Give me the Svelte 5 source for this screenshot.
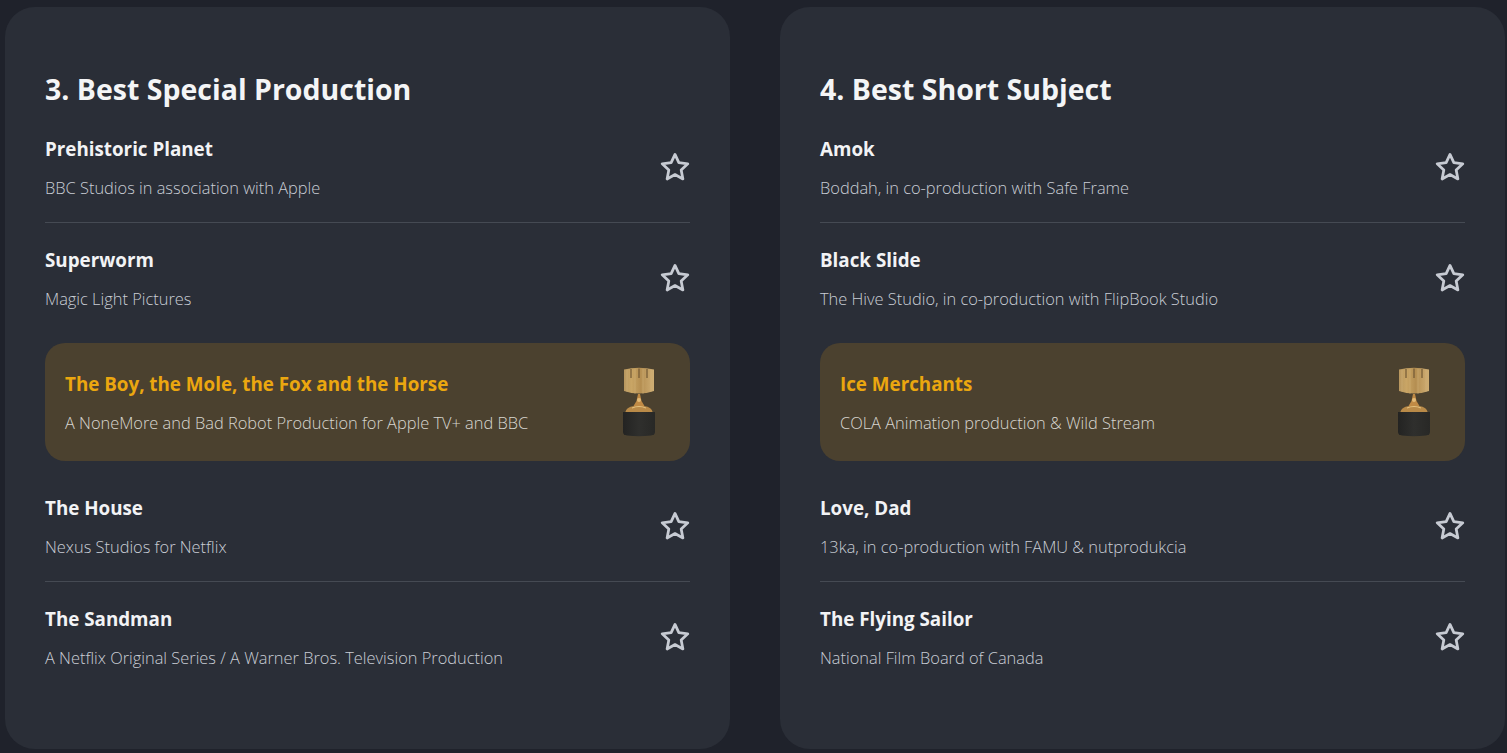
<script lang="ts">
    type Nominee = { title: string; studio: string; winner?: boolean };
    type Category = { heading: string; nominees: Nominee[] };

    const categories: Category[] = [
        {
            heading: "3. Best Special Production",
            nominees: [
                { title: "Prehistoric Planet", studio: "BBC Studios in association with Apple" },
                { title: "Superworm", studio: "Magic Light Pictures" },
                {
                    title: "The Boy, the Mole, the Fox and the Horse",
                    studio: "A NoneMore and Bad Robot Production for Apple TV+ and BBC",
                    winner: true
                },
                { title: "The House", studio: "Nexus Studios for Netflix" },
                { title: "The Sandman", studio: "A Netflix Original Series / A Warner Bros. Television Production" }
            ]
        },
        {
            heading: "4. Best Short Subject",
            nominees: [
                { title: "Amok", studio: "Boddah, in co-production with Safe Frame" },
                { title: "Black Slide", studio: "The Hive Studio, in co-production with FlipBook Studio" },
                { title: "Ice Merchants", studio: "COLA Animation production & Wild Stream", winner: true },
                { title: "Love, Dad", studio: "13ka, in co-production with FAMU & nutprodukcia" },
                { title: "The Flying Sailor", studio: "National Film Board of Canada" }
            ]
        }
    ];
</script>

<main class="page">
    {#each categories as cat, c}
        <section class="card">
            <h2 class="heading">{cat.heading}</h2>
            <ul class="list">
                {#each cat.nominees as n}
                    <li class="row" class:winner={n.winner}>
                        <div class="text">
                            <h3 class="title">{n.title}</h3>
                            <p class="studio">{n.studio}</p>
                        </div>
                        {#if n.winner}
                            <svg class="trophy" viewBox="0 0 34 70" aria-hidden="true">
                                <defs>
                                    <linearGradient id="cup{c}" x1="0" x2="1" y1="0" y2="0">
                                        <stop offset="0" stop-color="#b8975f" />
                                        <stop offset="0.25" stop-color="#c9a565" />
                                        <stop offset="0.55" stop-color="#b58f52" />
                                        <stop offset="1" stop-color="#cfae74" />
                                    </linearGradient>
                                    <linearGradient id="base{c}" x1="0" x2="1" y1="0" y2="0">
                                        <stop offset="0" stop-color="#232322" />
                                        <stop offset="0.5" stop-color="#2f2f2d" />
                                        <stop offset="1" stop-color="#282826" />
                                    </linearGradient>
                                </defs>
                                <path d="M2 2.5 Q17 -1 32 2.5 V24 Q17 29 2 24Z" fill="url(#cup{c})" />
                                <path d="M9 2V11M17 1.5V11M25 2V11" stroke="#6d5533" stroke-width="1.4" opacity="0.8" />
                                <path d="M5 3V25M13 2V27M21 2V27M29 3V25" stroke="#d6b77f" stroke-width="1" opacity="0.45" />
                                <path d="M16 27h2l1.5 7 3 5H11.500l3-5z" fill="#c08a45" />
                                <circle cx="17" cy="33" r="2" fill="#e3bb77" />
                                <path d="M3 46 Q4 40 12 39 H22 Q30 40 31 46Z" fill="#b98a48" />
                                <path d="M10 41 Q17 38 24 41" stroke="#e5c27f" stroke-width="1.2" fill="none" />
                                <path d="M1 45H33V65Q33 68 29 68.500Q17 70 5 68.500Q1 68 1 65Z" fill="url(#base{c})" />
                            </svg>
                        {:else}
                            <svg class="star" viewBox="0 0 30 30" aria-hidden="true">
                                <path
                                    d="M15 3.2l3.6 7.7 8.4 1.1-6.2 5.8 1.6 8.4L15 22.1l-7.4 4.1 1.6-8.4L3 12l8.4-1.1z"
                                    fill="none"
                                    stroke="#c7cbd3"
                                    stroke-width="2.6"
                                    stroke-linejoin="round"
                                />
                            </svg>
                        {/if}
                    </li>
                {/each}
            </ul>
        </section>
    {/each}
</main>

<style>
    :global(body) {
        margin: 0;
        background: #1f222b;
    }

    .page {
        display: grid;
        grid-template-columns: 725px 725px;
        gap: 50px;
        padding: 7px 2px 4px 5px;
        height: 753px;
        box-sizing: border-box;
        font-family: "Open Sans", "Noto Sans", sans-serif;
    }

    .card {
        background: #2a2e37;
        border-radius: 30px;
        padding: 62px 40px 0;
        box-sizing: border-box;
    }

    .heading {
        margin: 0;
        height: 43px;
        font-size: 28.5px;
        line-height: 40px;
        font-weight: 700;
        color: #f4f5f6;
    }

    .list {
        list-style: none;
        margin: 0;
        padding: 0;
    }

    .row {
        display: flex;
        align-items: center;
        justify-content: space-between;
        height: 111px;
        box-sizing: border-box;
        border-bottom: 1px solid #454a53;
    }

    .row:nth-child(2),
    .row:nth-child(5) {
        height: 110px;
        border-bottom: none;
    }

    .row.winner {
        height: 118px;
        margin: 10px 0;
        padding: 0 34px 0 20px;
        background: #4b412f;
        border: none;
        border-radius: 20px;
    }

    .text {
        display: flex;
        flex-direction: column;
        gap: 13px;
        padding-top: 2px;
    }

    .title {
        margin: 0;
        font-size: 18.8px;
        line-height: 26px;
        font-weight: 700;
        color: #f2f3f5;
    }

    .winner .title {
        color: #eba70f;
    }

    .studio {
        margin: 0;
        font-size: 16.4px;
        line-height: 26px;
        font-weight: 300;
        color: #c9cdd5;
    }

    .winner .studio {
        color: #d8d6cf;
    }

    .star {
        width: 32px;
        height: 32px;
        margin-right: -1px;
    }

    .trophy {
        width: 34px;
        height: 70px;
    }
</style>
